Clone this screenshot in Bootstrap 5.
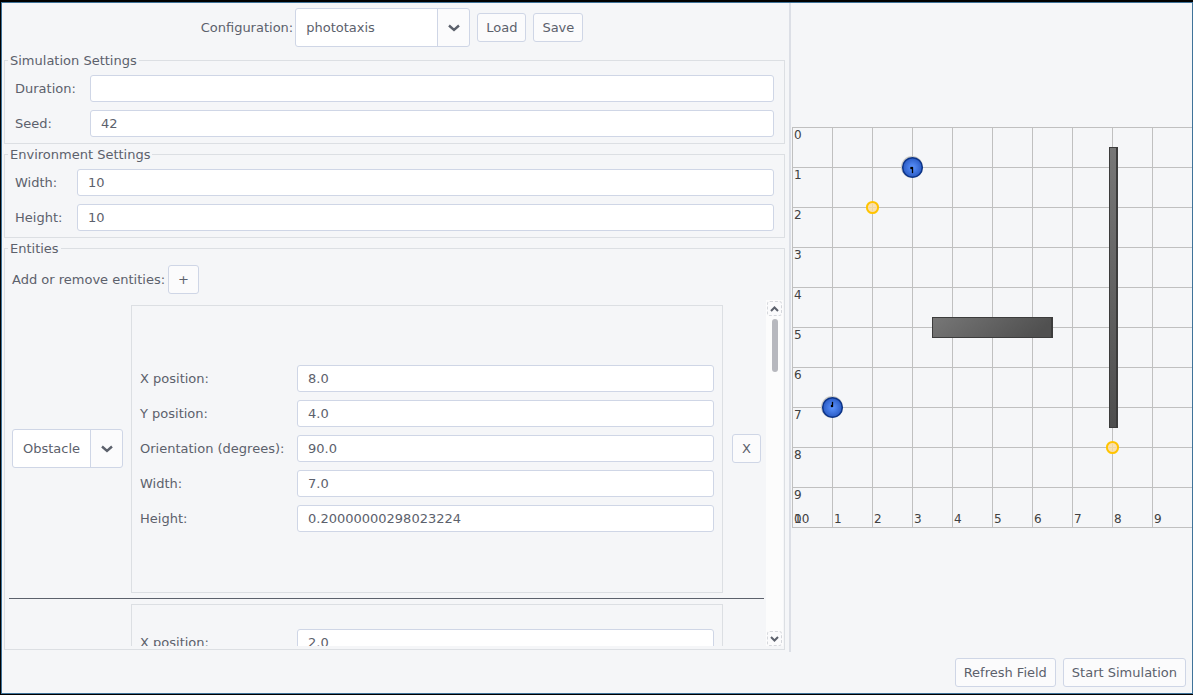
<!DOCTYPE html>
<html lang="en">
<head>
<meta charset="utf-8">
<meta name="viewport" content="width=device-width, initial-scale=1">
<title>Simulation</title>
<link rel="stylesheet" href="https://cdn.jsdelivr.net/npm/bootstrap@5.3.0/dist/css/bootstrap.min.css">
<style>
:root { --bg:#f5f6f8; --fg:#5c616c; --line:#dcdfe3; --edge:#cfd6e6; --face:#fbfbfc; }
body { font-family:"DejaVu Sans",sans-serif; font-size:13px; line-height:16px; color:var(--fg); background:#000; }
.window { height:100vh; border:solid #000; border-width:2px 0 1px 1px; }
.frame { background:var(--bg); border:1px solid #3f739a; }
.settings { padding:5px 4px 2px 2px; min-width:0; }
.group { border:1px solid var(--line); padding:0 10px 6px; margin:0 0 2px; min-width:0; }
.group legend { float:none; width:auto; height:16px; font-size:13px; line-height:18px; padding:0 2px; margin:0 0 7px -7px; }
.group-entities { padding:0 1px 3px 4px; margin:0; }
.group-entities legend { margin:0 0 9px -1px; }
.form-grid { display:grid; grid-template-columns:75px minmax(0,1fr); row-gap:8px; align-items:center; }
.form-grid.env { grid-template-columns:62px minmax(0,1fr); }
.form-grid.entity { grid-template-columns:157px minmax(0,1fr); }
.form-control, .form-select, .btn { font-size:13px; line-height:16px; color:var(--fg); border:1px solid var(--edge); border-radius:3px; }
.form-control { height:27px; padding:0 10px; background:#fff; }
.form-select { height:39px; padding:0 40px 0 10px;
  background:url("data:image/svg+xml,%3Csvg xmlns='http://www.w3.org/2000/svg' width='12' height='8'%3E%3Cpath d='M1 1.5L6 6L11 1.5' fill='none' stroke='%235c616c' stroke-width='2.4'/%3E%3C/svg%3E") no-repeat right 9px center / 12px 8px,
  linear-gradient(90deg,var(--edge) 1px,var(--face) 1px) no-repeat right / 32px 100%, #fff; }
.config-select { width:175px; }
.type-select { width:111px; margin-bottom:1px; }
.btn { height:29px; padding:0 8px; background:var(--face); white-space:nowrap; }
.btn:hover { background:#fff; color:var(--fg); border-color:var(--edge); }
.btn-add { width:31px; padding:0; }
.btn-remove { width:29px; padding:0; margin-bottom:1px; }
.config-row { margin-bottom:5px; padding-right:5px; gap:7px; }
.config-row label { margin-right:-5px; }
.add-row { margin-bottom:6px; padding-left:3px; gap:3px; }
.entity-list { overflow:hidden; min-width:0; }
.entity-row { padding:5px 3px; }
.entity-panel { border:1px solid var(--line); padding:24px 8px 25px; min-height:288px; min-width:0; margin:0 9px 0 8px; }
.entity-row + .entity-row { border-top:1px solid var(--fg); }
.scroller { width:17px; background:#fcfcfc; padding:1px 1px 0; margin-left:2px; }
.scroller button { width:15px; height:15px; padding:0; border:1px dashed #d5d7dc; border-radius:3px; background:var(--face); display:flex; align-items:center; justify-content:center; }
.thumb { width:6px; height:53px; border-radius:3px; background:#b7b8be; margin-top:3px; }
.field-pane { flex:0 0 403px; border-left:2px solid #dcdfe6; }
.field-pane text { font-size:12px; fill:#404040; }
.actions { padding:6px; gap:7px; }
</style>
</head>
<body>
<div class="window d-flex flex-column">
<div class="frame d-flex flex-column flex-fill overflow-hidden">
  <main class="d-flex flex-fill overflow-hidden">
    <section class="settings d-flex flex-column flex-fill">
      <div class="config-row d-flex justify-content-center align-items-center">
        <label for="cfg">Configuration:</label>
        <select id="cfg" class="form-select config-select"><option>phototaxis</option></select>
        <button class="btn" type="button">Load</button>
        <button class="btn" type="button">Save</button>
      </div>
      <fieldset class="group">
        <legend>Simulation Settings</legend>
        <div class="form-grid">
          <label for="dur">Duration:</label><input id="dur" class="form-control" type="text">
          <label for="seed">Seed:</label><input id="seed" class="form-control" type="text" value="42">
        </div>
      </fieldset>
      <fieldset class="group">
        <legend>Environment Settings</legend>
        <div class="form-grid env">
          <label for="ew">Width:</label><input id="ew" class="form-control" type="text" value="10">
          <label for="eh">Height:</label><input id="eh" class="form-control" type="text" value="10">
        </div>
      </fieldset>
      <fieldset class="group group-entities d-flex flex-column flex-fill overflow-hidden">
        <legend>Entities</legend>
        <div class="add-row d-flex align-items-center">
          <label for="add">Add or remove entities:</label>
          <button id="add" class="btn btn-add" type="button">+</button>
        </div>
        <div class="d-flex flex-fill overflow-hidden">
          <div class="entity-list flex-fill">
            <div class="entity-row d-flex align-items-center">
              <select class="form-select type-select flex-shrink-0" aria-label="Entity type"><option>Obstacle</option></select>
              <div class="entity-panel flex-fill d-flex flex-column justify-content-center">
                <div class="form-grid entity">
                  <label for="x1">X position:</label><input id="x1" class="form-control" type="text" value="8.0">
                  <label for="y1">Y position:</label><input id="y1" class="form-control" type="text" value="4.0">
                  <label for="o1">Orientation (degrees):</label><input id="o1" class="form-control" type="text" value="90.0">
                  <label for="w1">Width:</label><input id="w1" class="form-control" type="text" value="7.0">
                  <label for="h1">Height:</label><input id="h1" class="form-control" type="text" value="0.20000000298023224">
                </div>
              </div>
              <button class="btn btn-remove flex-shrink-0" type="button">X</button>
            </div>
            <div class="entity-row d-flex">
              <div class="type-select flex-shrink-0"></div>
              <div class="entity-panel flex-fill">
                <div class="form-grid entity">
                  <label for="x2">X position:</label><input id="x2" class="form-control" type="text" value="2.0">
                </div>
              </div>
              <div class="btn-remove flex-shrink-0"></div>
            </div>
          </div>
          <div class="scroller d-flex flex-column align-items-center flex-shrink-0">
            <button type="button" aria-label="Scroll up"><svg width="9" height="6"><path d="M1 5L4.500 1.500L8 5" fill="none" stroke="#5c616c" stroke-width="2"/></svg></button>
            <div class="thumb"></div>
            <button type="button" class="mt-auto" aria-label="Scroll down"><svg width="9" height="6"><path d="M1 1L4.500 4.500L8 1" fill="none" stroke="#5c616c" stroke-width="2"/></svg></button>
          </div>
        </div>
      </fieldset>
    </section>
    <section class="field-pane d-flex align-items-center">
      <svg class="w-100" viewBox="0 0 401 401" role="img" aria-label="Simulation field">
        <defs>
          <linearGradient id="gh" x1="0" y1="0" x2="1" y2="0.200"><stop offset="0" stop-color="#777"/><stop offset="1" stop-color="#505050"/></linearGradient>
          <linearGradient id="gv" x1="0" y1="0" x2="0" y2="1"><stop offset="0" stop-color="#777"/><stop offset="1" stop-color="#4e4e4e"/></linearGradient>
          <radialGradient id="gr"><stop offset="0" stop-color="#5c94ff"/><stop offset="1" stop-color="#2a5bc4"/></radialGradient>
          <radialGradient id="gl"><stop offset="0" stop-color="#f7ebb8"/><stop offset="1" stop-color="#ffd9a8"/></radialGradient>
        </defs>
        <path fill="none" stroke="#c0c0c0" d="M1 .5H401M1 40.500H401M1 80.500H401M1 120.500H401M1 160.500H401M1 200.500H401M1 240.500H401M1 280.500H401M1 320.500H401M1 360.500H401M1 400.500H401M1.500 0V401M41.500 0V401M81.500 0V401M121.500 0V401M161.500 0V401M201.500 0V401M241.500 0V401M281.500 0V401M321.500 0V401M361.500 0V401"/>
        <g>
          <text x="3" y="12">0</text><text x="3" y="52">1</text><text x="3" y="92">2</text><text x="3" y="132">3</text><text x="3" y="172">4</text><text x="3" y="212">5</text><text x="3" y="252">6</text><text x="3" y="292">7</text><text x="3" y="332">8</text><text x="3" y="372">9</text><text x="3" y="396">10</text>
          <text x="3" y="396">0</text><text x="43" y="396">1</text><text x="83" y="396">2</text><text x="123" y="396">3</text><text x="163" y="396">4</text><text x="203" y="396">5</text><text x="243" y="396">6</text><text x="283" y="396">7</text><text x="323" y="396">8</text><text x="363" y="396">9</text>
        </g>
        <rect x="141.500" y="190.500" width="120" height="20" fill="url(#gh)" stroke="#3c3c3c"/>
        <path d="M260.500 191V210" stroke="#3c3c3c"/>
        <rect x="318.500" y="20.500" width="8" height="280" fill="url(#gv)" stroke="#3c3c3c"/>
        <path d="M325.500 21V300" stroke="#3c3c3c"/>
        <g fill="#c8c8c4"><circle cx="121" cy="40" r="11"/><circle cx="41" cy="280" r="11"/></g>
        <g stroke="#0c3489" stroke-width="1.500" fill="url(#gr)"><circle cx="121.500" cy="40.500" r="9.800"/><circle cx="41.500" cy="280.500" r="9.800"/></g>
        <path d="M119.500 40h2.500v6h-1v-4h-1.500zM41 275h1v5h-2v-2h1z" fill="#000" stroke="#000" stroke-width=".3"/>
        <g stroke="#ffc400" stroke-width="2" fill="url(#gl)"><circle cx="81.500" cy="80.500" r="5.600"/><circle cx="321.500" cy="320.500" r="5.600"/></g>
        <path d="M77.500 80.500h8M81.500 76.500v8M317.500 320.500h8M321.500 316.500v8" stroke="#ecd5a4"/>
      </svg>
    </section>
  </main>
  <footer class="actions d-flex justify-content-end">
    <button class="btn" type="button">Refresh Field</button>
    <button class="btn" type="button">Start Simulation</button>
  </footer>
</div>
</div>
<script src="https://cdn.jsdelivr.net/npm/bootstrap@5.3.0/dist/js/bootstrap.bundle.min.js"></script>
</body>
</html>
